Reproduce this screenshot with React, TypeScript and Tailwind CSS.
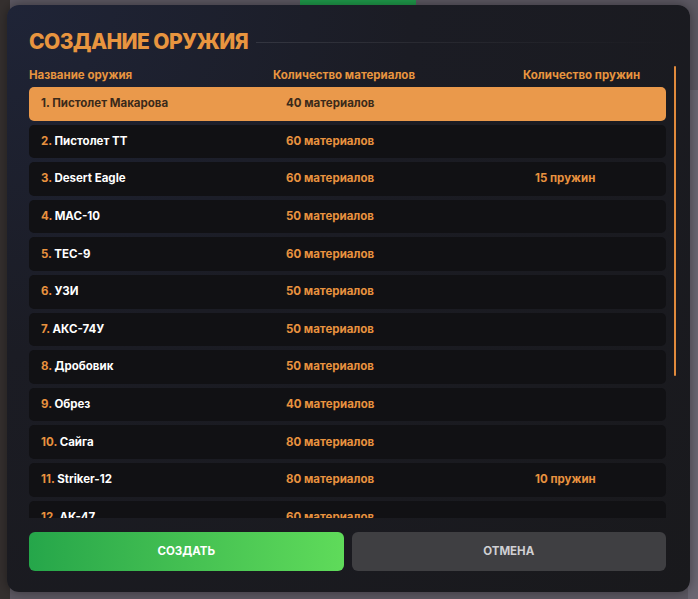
import { useState } from 'react';

type Weapon = {
  name: string;
  materials: number;
  springs?: number;
};

const weapons: Weapon[] = [
  { name: 'Пистолет Макарова', materials: 40 },
  { name: 'Пистолет ТТ', materials: 60 },
  { name: 'Desert Eagle', materials: 60, springs: 15 },
  { name: 'MAC-10', materials: 50 },
  { name: 'TEC-9', materials: 60 },
  { name: 'УЗИ', materials: 50 },
  { name: 'АКС-74У', materials: 50 },
  { name: 'Дробовик', materials: 50 },
  { name: 'Обрез', materials: 40 },
  { name: 'Сайга', materials: 80 },
  { name: 'Striker-12', materials: 80, springs: 10 },
  { name: 'АК-47', materials: 60 },
  { name: 'М4А1', materials: 70 },
  { name: 'Снайперская винтовка', materials: 90, springs: 20 },
];

const font = { fontFamily: 'Inter, "Noto Sans", sans-serif' };

function WeaponRow({ index, weapon, active, onSelect }: {
  index: number;
  weapon: Weapon;
  active: boolean;
  onSelect: () => void;
}) {
  return (
    <div
      onClick={onSelect}
      className={`flex h-[33.6px] shrink-0 cursor-pointer items-center rounded-[5px] pl-[12px] text-[11.5px] font-bold ${
        active ? 'bg-[#ea994b] text-[#3b2a1a]' : 'bg-[#111114] text-white'
      }`}
    >
      <div className="w-[245px] truncate">
        <span className={active ? '' : 'text-[#e8923f]'}>{index + 1}.</span> {weapon.name}
      </div>
      <div className={`w-[249px] ${active ? '' : 'text-[#e8923f]'}`}>{weapon.materials} материалов</div>
      <div className={active ? '' : 'text-[#e8923f]'}>{weapon.springs ? `${weapon.springs} пружин` : ''}</div>
    </div>
  );
}

export default function App() {
  const [selected, setSelected] = useState(0);

  return (
    <div className="relative h-[599px] w-[698px] overflow-hidden bg-[#5c5862]" style={font}>
      {/* scene behind the dialog */}
      <div className="absolute left-0 top-0 h-full w-[10px] bg-[#35302f]" />
      <div className="absolute left-[300px] top-0 h-[5px] w-[116px] bg-[#1f9a4a]" />
      <div className="absolute right-0 top-[90px] h-[509px] w-[10px] bg-[#6a6672]" />

      <div className="relative ml-[7px] mt-[5px] flex h-[587px] w-[683px] flex-col rounded-[12px] bg-[radial-gradient(ellipse_at_top_left,#1f2437_0%,#1b1c24_42%,#19191c_100%)] pl-[22px] pr-[11px] pt-[21px] pb-[21px] shadow-[0_0_12px_rgba(0,0,0,0.4)]">
        {/* title */}
        <div className="flex h-[32px] items-center gap-[8px]">
          <h1 className="text-[21px] font-extrabold uppercase tracking-[-0.6px] text-[#e8953f]">Создание оружия</h1>
          <div className="h-px flex-1 bg-gradient-to-r from-white/10 to-transparent" />
        </div>

        <div className="mt-[8px] flex">
          <div className="flex w-[637px] flex-col">
            {/* column headers */}
            <div className="flex h-[20px] items-center text-[11.5px] font-bold text-[#e8953f]">
              <div className="w-[244px]">Название оружия</div>
              <div className="w-[250px]">Количество материалов</div>
              <div>Количество пружин</div>
            </div>

            {/* weapon list */}
            <div className="mt-px flex h-[431px] flex-col gap-[4px] overflow-hidden">
              {weapons.map((w, i) => (
                <WeaponRow key={w.name} index={i} weapon={w} active={i === selected} onSelect={() => setSelected(i)} />
              ))}
            </div>
          </div>

          {/* scrollbar */}
          <div className="ml-[8px] w-[2px]">
            <div className="h-[310px] w-[2px] rounded-full bg-[#e08a3c]" />
          </div>
        </div>

        {/* actions */}
        <div className="mt-[14px] flex w-[637px] gap-[8px]">
          <button className="h-[39px] flex-1 rounded-[6px] bg-gradient-to-r from-[#25a64a] to-[#5fdb5a] text-[11.5px] font-bold uppercase text-white">
            Создать
          </button>
          <button className="h-[39px] flex-1 rounded-[6px] bg-[#3f3f42] text-[11.5px] font-bold uppercase text-[#cfcfd2]">
            Отмена
          </button>
        </div>
      </div>
    </div>
  );
}
